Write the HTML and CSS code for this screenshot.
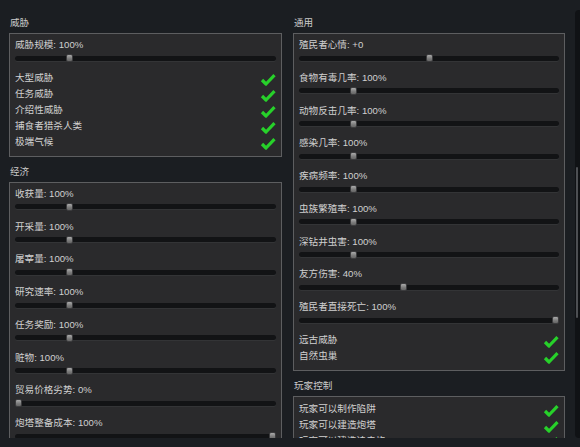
FILE: index.html
```html
<html>
  <head>
    <title>Storyteller settings</title>
    <link rel="stylesheet" href="styles.css">
  </head>
  <body>
    <div class="window">
      <div class="scroll">

        <!-- left column -->
        <div class="col">
          <div class="group">
            <div class="group-title">威胁</div>
            <div class="box">
              <div class="item">
                <div class="label">威胁规模: 100%</div>
                <div class="slider"><div class="bar"></div><span class="handle" style="--pos:0.2"></span></div>
              </div>
              <ul class="checks">
                <li>大型威胁<svg class="tick" viewBox="0 0 16 13"><polyline points="2,7 6,11 14.5,2.2"/></svg></li>
                <li>任务威胁<svg class="tick" viewBox="0 0 16 13"><polyline points="2,7 6,11 14.5,2.2"/></svg></li>
                <li>介绍性威胁<svg class="tick" viewBox="0 0 16 13"><polyline points="2,7 6,11 14.5,2.2"/></svg></li>
                <li>捕食者猎杀人类<svg class="tick" viewBox="0 0 16 13"><polyline points="2,7 6,11 14.5,2.2"/></svg></li>
                <li>极端气候<svg class="tick" viewBox="0 0 16 13"><polyline points="2,7 6,11 14.5,2.2"/></svg></li>
              </ul>
            </div>
          </div>

          <div class="group">
            <div class="group-title">经济</div>
            <div class="box">
              <div class="item">
                <div class="label">收获量: 100%</div>
                <div class="slider"><div class="bar"></div><span class="handle" style="--pos:0.2"></span></div>
              </div>
              <div class="item">
                <div class="label">开采量: 100%</div>
                <div class="slider"><div class="bar"></div><span class="handle" style="--pos:0.2"></span></div>
              </div>
              <div class="item">
                <div class="label">屠宰量: 100%</div>
                <div class="slider"><div class="bar"></div><span class="handle" style="--pos:0.2"></span></div>
              </div>
              <div class="item">
                <div class="label">研究速率: 100%</div>
                <div class="slider"><div class="bar"></div><span class="handle" style="--pos:0.2"></span></div>
              </div>
              <div class="item">
                <div class="label">任务奖励: 100%</div>
                <div class="slider"><div class="bar"></div><span class="handle" style="--pos:0.2"></span></div>
              </div>
              <div class="item">
                <div class="label">赃物: 100%</div>
                <div class="slider"><div class="bar"></div><span class="handle" style="--pos:0.2"></span></div>
              </div>
              <div class="item">
                <div class="label">贸易价格劣势: 0%</div>
                <div class="slider"><div class="bar"></div><span class="handle" style="--pos:0"></span></div>
              </div>
              <div class="item">
                <div class="label">炮塔整备成本: 100%</div>
                <div class="slider"><div class="bar"></div><span class="handle" style="--pos:1"></span></div>
              </div>
            </div>
          </div>
        </div>

        <!-- right column -->
        <div class="col">
          <div class="group">
            <div class="group-title">通用</div>
            <div class="box">
              <div class="item">
                <div class="label">殖民者心情: +0</div>
                <div class="slider"><div class="bar"></div><span class="handle" style="--pos:0.5"></span></div>
              </div>
              <div class="item">
                <div class="label">食物有毒几率: 100%</div>
                <div class="slider"><div class="bar"></div><span class="handle" style="--pos:0.2"></span></div>
              </div>
              <div class="item">
                <div class="label">动物反击几率: 100%</div>
                <div class="slider"><div class="bar"></div><span class="handle" style="--pos:0.2"></span></div>
              </div>
              <div class="item">
                <div class="label">感染几率: 100%</div>
                <div class="slider"><div class="bar"></div><span class="handle" style="--pos:0.2"></span></div>
              </div>
              <div class="item">
                <div class="label">疾病频率: 100%</div>
                <div class="slider"><div class="bar"></div><span class="handle" style="--pos:0.2"></span></div>
              </div>
              <div class="item">
                <div class="label">虫族繁殖率: 100%</div>
                <div class="slider"><div class="bar"></div><span class="handle" style="--pos:0.2"></span></div>
              </div>
              <div class="item">
                <div class="label">深钻井虫害: 100%</div>
                <div class="slider"><div class="bar"></div><span class="handle" style="--pos:0.2"></span></div>
              </div>
              <div class="item">
                <div class="label">友方伤害: 40%</div>
                <div class="slider"><div class="bar"></div><span class="handle" style="--pos:0.4"></span></div>
              </div>
              <div class="item">
                <div class="label">殖民者直接死亡: 100%</div>
                <div class="slider"><div class="bar"></div><span class="handle" style="--pos:1"></span></div>
              </div>
              <ul class="checks">
                <li>远古威胁<svg class="tick" viewBox="0 0 16 13"><polyline points="2,7 6,11 14.5,2.2"/></svg></li>
                <li>自然虫巢<svg class="tick" viewBox="0 0 16 13"><polyline points="2,7 6,11 14.5,2.2"/></svg></li>
              </ul>
            </div>
          </div>

          <div class="group">
            <div class="group-title">玩家控制</div>
            <div class="box">
              <ul class="checks">
                <li>玩家可以制作陷阱<svg class="tick" viewBox="0 0 16 13"><polyline points="2,7 6,11 14.5,2.2"/></svg></li>
                <li>玩家可以建造炮塔<svg class="tick" viewBox="0 0 16 13"><polyline points="2,7 6,11 14.5,2.2"/></svg></li>
                <li>玩家可以建造迫击炮<svg class="tick" viewBox="0 0 16 13"><polyline points="2,7 6,11 14.5,2.2"/></svg></li>
              </ul>
            </div>
          </div>
        </div>

      </div>

      <div class="scrollbar"><div class="thumb"></div></div>
    </div>
  </body>
</html>
```
FILE: styles.css
```css
body {
  margin: 0;
  background: #1b1e22;
  color: #d0d0d0;
  font-family: "Liberation Sans", "Noto Sans CJK SC", sans-serif;
  font-size: 9.6px;
}

.window {
  display: flex;
  width: 580px;
  height: 447px;
}

.scroll {
  display: grid;
  grid-template-columns: 273px 272px;
  column-gap: 11px;
  align-items: start;
  height: 438px;
  overflow: hidden;
  padding: 15px 0 0 9px;
  box-sizing: border-box;
}

.col {
  display: flex;
  flex-direction: column;
  gap: 7px;
}

.group-title {
  line-height: 16px;
  height: 16px;
  padding-left: 1px;
  margin-bottom: 2px;
  color: #cbcbcb;
}

.box {
  background: #2a2a2c;
  border: 1px solid #5d5e60;
  padding: 4px 5px 6px;
}

.item {
  margin-bottom: 6.75px;
}

.label {
  line-height: 14px;
  height: 14px;
  white-space: nowrap;
}

.slider {
  position: relative;
  height: 12px;
  display: flex;
  align-items: center;
}

.slider .bar {
  flex: 1;
  height: 5px;
  border-radius: 3px;
  background: #121315;
  box-shadow: 0 1px 0 #333436;
}

.handle {
  position: absolute;
  top: 2px;
  left: calc((100% - 7px) * var(--pos));
  width: 7px;
  height: 8px;
  box-sizing: border-box;
  border: 1px solid #3c3c3e;
  border-radius: 2px;
  background: linear-gradient(#aaaaaa, #7a7a7a 60%, #666666);
}

.checks {
  list-style: none;
  margin: -1px 0 0;
  padding: 0;
}

.box > .checks:first-child {
  margin-top: 0;
}

.checks li {
  display: flex;
  justify-content: space-between;
  align-items: center;
  height: 16px;
  line-height: 16px;
  white-space: nowrap;
}

.tick {
  width: 16px;
  height: 13px;
  margin-top: 3px;
  flex: none;
  overflow: visible;
}

.tick polyline {
  fill: none;
  stroke: #27d12a;
  stroke-width: 3.2;
  stroke-linejoin: round;
}

.scrollbar {
  margin: 10px 0 0 auto;
  width: 5px;
  height: 428px;
  background: #101215;
  border-radius: 4px 0 0 4px;
  padding-top: 157px;
  box-sizing: border-box;
}

.thumb {
  width: 2px;
  height: 151px;
  margin-left: 1px;
  background: #4d4f53;
  border-radius: 1px;
}
```
